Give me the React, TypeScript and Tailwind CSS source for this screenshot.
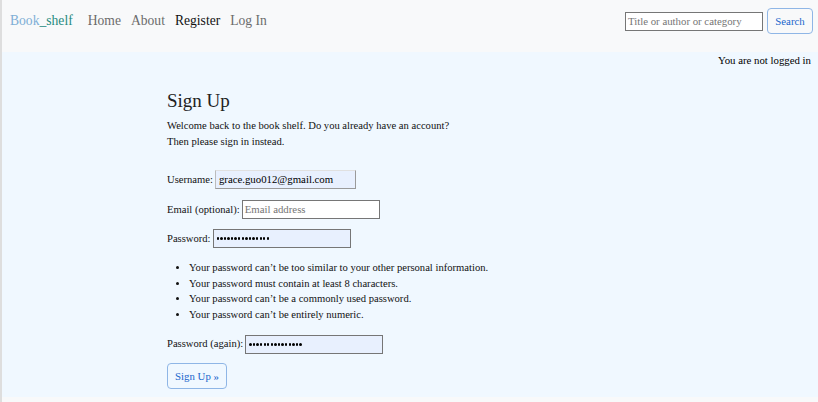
import React from "react";

function Dots() {
  return (
    <span className="flex items-center gap-[1.2px]">
      {Array.from({ length: 15 }).map((_, i) => (
        <span key={i} className="block w-[2.4px] h-[2.4px] rounded-full bg-black" />
      ))}
    </span>
  );
}

export default function App() {
  const serif = { fontFamily: '"Liberation Serif", "Times New Roman", serif' };
  return (
    <div style={serif} className="w-[818px] h-[402px] bg-[#f8f9fa] border-l-2 border-[#dedede] text-[#212529] overflow-hidden">
      <nav className="h-[52px] pb-[10px]">
        <div className="h-[42px] flex items-center pl-[8px] pr-[5px]">
          <div className="text-[13.6px] leading-none">
            <span className="text-[#7fafd6]">Book</span>
            <span className="text-[#1f8a80]">_shelf</span>
          </div>
          <div className="flex items-center ml-[15px] gap-[10px] text-[13.6px] leading-none">
            <span className="text-[#6c6c6c]">Home</span>
            <span className="text-[#6c6c6c]">About</span>
            <span className="text-[#111]">Register</span>
            <span className="text-[#6c6c6c]">Log In</span>
          </div>
          <div className="ml-auto flex items-center gap-[4px]">
            <div className="w-[138px] h-[19px] border border-[#767676] bg-white flex items-center px-[2px] text-[10.8px] text-[#757575]">
              Title or author or category
            </div>
            <div className="h-[26px] w-[46px] rounded-[4px] border border-[#8fb6e6] flex items-center justify-center text-[10.8px] text-[#1a66cc]">
              Search
            </div>
          </div>
        </div>
      </nav>
      <main className="bg-[#f0f8ff] h-[345px] relative">
        <div className="flex justify-end pr-[7px] pt-[1px] text-[10.8px] leading-[14px] text-black">
          You are not logged in
        </div>
        <div className="pl-[165px] pt-[23px] text-[10.6px] text-[#111]">
          <h1 className="text-[19px] leading-[22px] text-[#222]">Sign Up</h1>
          <p className="mt-[6px] leading-[15.5px]">
            Welcome back to the book shelf. Do you already have an account?
            <br />
            Then please sign in instead.
          </p>
          <div className="mt-[21px] flex items-center h-[19px]">
            <span>Username:</span>
            <div className="ml-[2px] w-[141px] h-[19px] border border-[#9a9a9a] border-t-[#e0e0e0] border-l-[#bcbcbc] bg-[#e8f0fe] flex items-center px-[3px] text-[10.8px] text-black">
              grace.guo012@gmail.com
            </div>
          </div>
          <div className="mt-[11px] flex items-center h-[19px]">
            <span>Email (optional):</span>
            <div className="ml-[2px] w-[138px] h-[19px] border border-[#767676] bg-white flex items-center px-[2px] text-[10.8px] text-[#757575]">
              Email address
            </div>
          </div>
          <div className="mt-[10px] flex items-center h-[19px]">
            <span>Password:</span>
            <div className="ml-[2px] w-[138px] h-[19px] border border-[#767676] bg-[#e8f0fe] flex items-center px-[3px]">
              <Dots />
            </div>
          </div>
          <ul className="mt-[12px] pl-[22px] list-disc leading-[15.7px]">
            <li>Your password can’t be too similar to your other personal information.</li>
            <li>Your password must contain at least 8 characters.</li>
            <li>Your password can’t be a commonly used password.</li>
            <li>Your password can’t be entirely numeric.</li>
          </ul>
          <div className="mt-[12px] flex items-center h-[19px]">
            <span>Password (again):</span>
            <div className="ml-[2px] w-[138px] h-[19px] border border-[#767676] bg-[#e8f0fe] flex items-center px-[3px]">
              <Dots />
            </div>
          </div>
          <div className="mt-[9px] w-[60px] h-[26px] rounded-[4px] border border-[#8fb6e6] flex items-center justify-center text-[10.8px] text-[#1a66cc]">
            Sign Up »
          </div>
        </div>
      </main>
    </div>
  );
}
